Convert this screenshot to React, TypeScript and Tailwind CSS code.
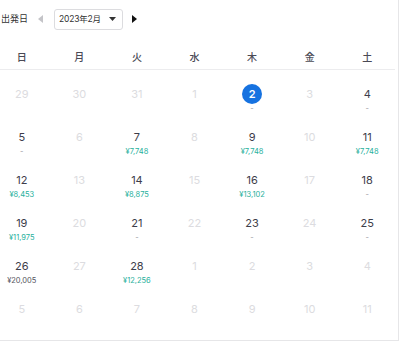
import React from "react";

type Cell = { d: number; p?: string; off?: boolean; sel?: boolean; gray?: boolean };

const rows: Cell[][] = [
  [{ d: 29, off: true }, { d: 30, off: true }, { d: 31, off: true }, { d: 1, off: true }, { d: 2, sel: true, p: "-" }, { d: 3, off: true }, { d: 4, p: "-" }],
  [{ d: 5, p: "-" }, { d: 6, off: true }, { d: 7, p: "¥7,748" }, { d: 8, off: true }, { d: 9, p: "¥7,748" }, { d: 10, off: true }, { d: 11, p: "¥7,748" }],
  [{ d: 12, p: "¥8,453" }, { d: 13, off: true }, { d: 14, p: "¥8,875" }, { d: 15, off: true }, { d: 16, p: "¥13,102" }, { d: 17, off: true }, { d: 18, p: "-" }],
  [{ d: 19, p: "¥11,975" }, { d: 20, off: true }, { d: 21, p: "-" }, { d: 22, off: true }, { d: 23, p: "-" }, { d: 24, off: true }, { d: 25, p: "-" }],
  [{ d: 26, p: "¥20,005", gray: true }, { d: 27, off: true }, { d: 28, p: "¥12,256" }, { d: 1, off: true }, { d: 2, off: true }, { d: 3, off: true }, { d: 4, off: true }],
  [5, 6, 7, 8, 9, 10, 11].map((d) => ({ d, off: true })),
];

const weekdays = ["日", "月", "火", "水", "木", "金", "土"];

export default function App() {
  return (
    <div
      className="w-[399px] h-[341px] bg-white border-r border-b border-[#e6e6e8] overflow-hidden"
      style={{ fontFamily: "Inter, 'Noto Sans CJK JP', sans-serif" }}
    >
      {/* ヘッダー */}
      <div className="h-[37px] flex items-center text-[9px] text-[#333] whitespace-nowrap">
        <span className="ml-[1px] w-[36px]">出発日</span>
        <svg width="8" height="10" viewBox="0 0 8 10">
          <polygon points="6,1 6,9 1,5" fill="#c4c4c8" />
        </svg>
        <div className="ml-[9px] mt-[1px] w-[69px] h-[21px] border border-[#dcdcdf] rounded-[3px] flex items-center pl-[4px] pr-[6px] justify-between">
          <span className="text-[8.5px] tracking-[-0.2px]">2023年2月</span>
          <svg width="7" height="4" viewBox="0 0 7 4">
            <polygon points="0,0 7,0 3.5,4" fill="#333" />
          </svg>
        </div>
        <svg width="8" height="10" viewBox="0 0 8 10" className="ml-[7px]">
          <polygon points="2,1 2,9 7,5" fill="#111" />
        </svg>
      </div>

      {/* 曜日 */}
      <div className="w-[395px] border-b border-[#ececee]">
        <div className="-ml-[7px] w-[403px] grid grid-cols-7 h-[32px] items-end pb-[6px]">
          {weekdays.map((w) => (
            <div key={w} className="text-center text-[10px] leading-[12px] font-medium text-[#4a4a55]">
              {w}
            </div>
          ))}
        </div>
      </div>

      {/* 日付 */}
      <div className="-ml-[7px] w-[403px] grid grid-cols-7">
        {rows.flat().map((c, i) => (
          <div key={i} className="h-[43px] pt-[17px] flex flex-col items-center">
            {c.sel ? (
              <span className="h-[14px] flex items-center justify-center">
                <span className="w-[20px] h-[20px] rounded-full bg-[#1672e0] text-white text-[11px] font-semibold flex items-center justify-center">
                  {c.d}
                </span>
              </span>
            ) : (
              <span
                className={`h-[14px] leading-[14px] text-[11px] ${
                  c.off ? "text-[#dcdce0]" : "text-[#3d3d4a]"
                }`}
              >
                {c.d}
              </span>
            )}
            {c.p && (
              <span
                className={`mt-[3px] leading-[10px] text-[7.5px] ${
                  c.p === "-" ? "text-[#9a9aa2]" : c.gray ? "text-[#555560]" : "text-[#27b09c]"
                }`}
              >
                {c.p}
              </span>
            )}
          </div>
        ))}
      </div>
    </div>
  );
}
